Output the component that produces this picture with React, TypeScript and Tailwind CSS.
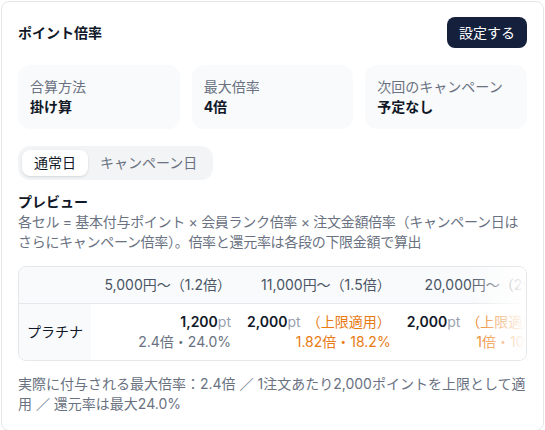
import React from "react";

const font = "font-['Inter','Noto_Sans_CJK_JP',sans-serif]";

function Stat({ label, value }: { label: string; value: string }) {
  return (
    <div className="rounded-xl bg-gray-50 px-3 py-3">
      <div className="text-sm leading-5 text-gray-500">{label}</div>
      <div className="text-sm font-bold leading-5 text-gray-900">{value}</div>
    </div>
  );
}

const cols = [
  { head: "5,000円〜（1.2倍）", pts: "1,200", capped: false, rate: "2.4倍・24.0%", w: "min-w-[148px]" },
  { head: "11,000円〜（1.5倍）", pts: "2,000", capped: true, rate: "1.82倍・18.2%", w: "min-w-[156px]" },
  { head: "20,000円〜（2倍）", pts: "2,000", capped: true, rate: "1倍・10.0%", w: "min-w-[156px]" },
  { head: "30,000円〜（2.5倍）", pts: "2,000", capped: true, rate: "0.67倍・6.7%", w: "min-w-[156px]" },
];

export default function App() {
  return (
    <div className={`p-px ${font}`}>
      <div className="rounded-lg border border-gray-200 bg-white px-4 pb-4 pt-[15px]">
        <div className="flex items-center justify-between">
          <h2 className="text-sm font-bold text-gray-900">ポイント倍率</h2>
          <button className="h-[31px] rounded-lg bg-[#14203c] px-3 text-sm leading-5 text-white">
            設定する
          </button>
        </div>

        <div className="mt-[17px] grid grid-cols-3 gap-3">
          <Stat label="合算方法" value="掛け算" />
          <Stat label="最大倍率" value="4倍" />
          <Stat label="次回のキャンペーン" value="予定なし" />
        </div>

        <div className="mt-[17px] inline-flex rounded-xl bg-gray-100 p-1">
          <button className="rounded-lg bg-white px-3 py-[3px] text-sm leading-5 text-gray-900 shadow-sm">
            通常日
          </button>
          <button className="rounded-lg px-3 py-[3px] text-sm leading-5 text-gray-500">
            キャンペーン日
          </button>
        </div>

        <div className="mt-3">
          <div className="text-sm font-bold leading-5 text-gray-900">プレビュー</div>
          <p className="text-sm leading-5 tracking-[-0.3px] text-gray-500">
            各セル = 基本付与ポイント × 会員ランク倍率 × 注文金額倍率（キャンペーン日はさらにキャンペーン倍率）。倍率と還元率は各段の下限金額で算出
          </p>
        </div>

        <div className="relative mt-3.5 overflow-hidden rounded-lg border border-gray-200">
          <table className="border-collapse whitespace-nowrap text-sm leading-5">
            <thead>
              <tr className="border-b border-gray-200 bg-gray-50">
                <th className="min-w-[71px] px-2 py-2"></th>
                {cols.map((c) => (
                  <th key={c.head} className={`${c.w} px-2 py-2 text-right font-normal text-gray-600`}>
                    {c.head}
                  </th>
                ))}
              </tr>
            </thead>
            <tbody>
              <tr>
                <td className="min-w-[71px] bg-gray-50 px-2 py-2 text-left text-gray-900">プラチナ</td>
                {cols.map((c) => (
                  <td key={c.head} className={`${c.w} px-2 py-2 text-right`}>
                    <div>
                      <span className="font-semibold text-gray-900">{c.pts}</span>
                      <span className="text-gray-400">pt</span>
                      {c.capped && <span className="ml-1.5 text-[#e97b12]">（上限適用）</span>}
                    </div>
                    <div className={c.capped ? "text-[#e97b12]" : "text-gray-500"}>{c.rate}</div>
                  </td>
                ))}
              </tr>
            </tbody>
          </table>
          <div className="pointer-events-none absolute inset-y-0 right-0 w-14 bg-linear-to-l from-white to-transparent"></div>
        </div>

        <p className="mt-[13px] text-sm leading-5 text-gray-500">
          実際に付与される最大倍率：2.4倍 ／ 1注文あたり2,000ポイントを上限として適用 ／ 還元率は最大24.0%
        </p>
      </div>
    </div>
  );
}
